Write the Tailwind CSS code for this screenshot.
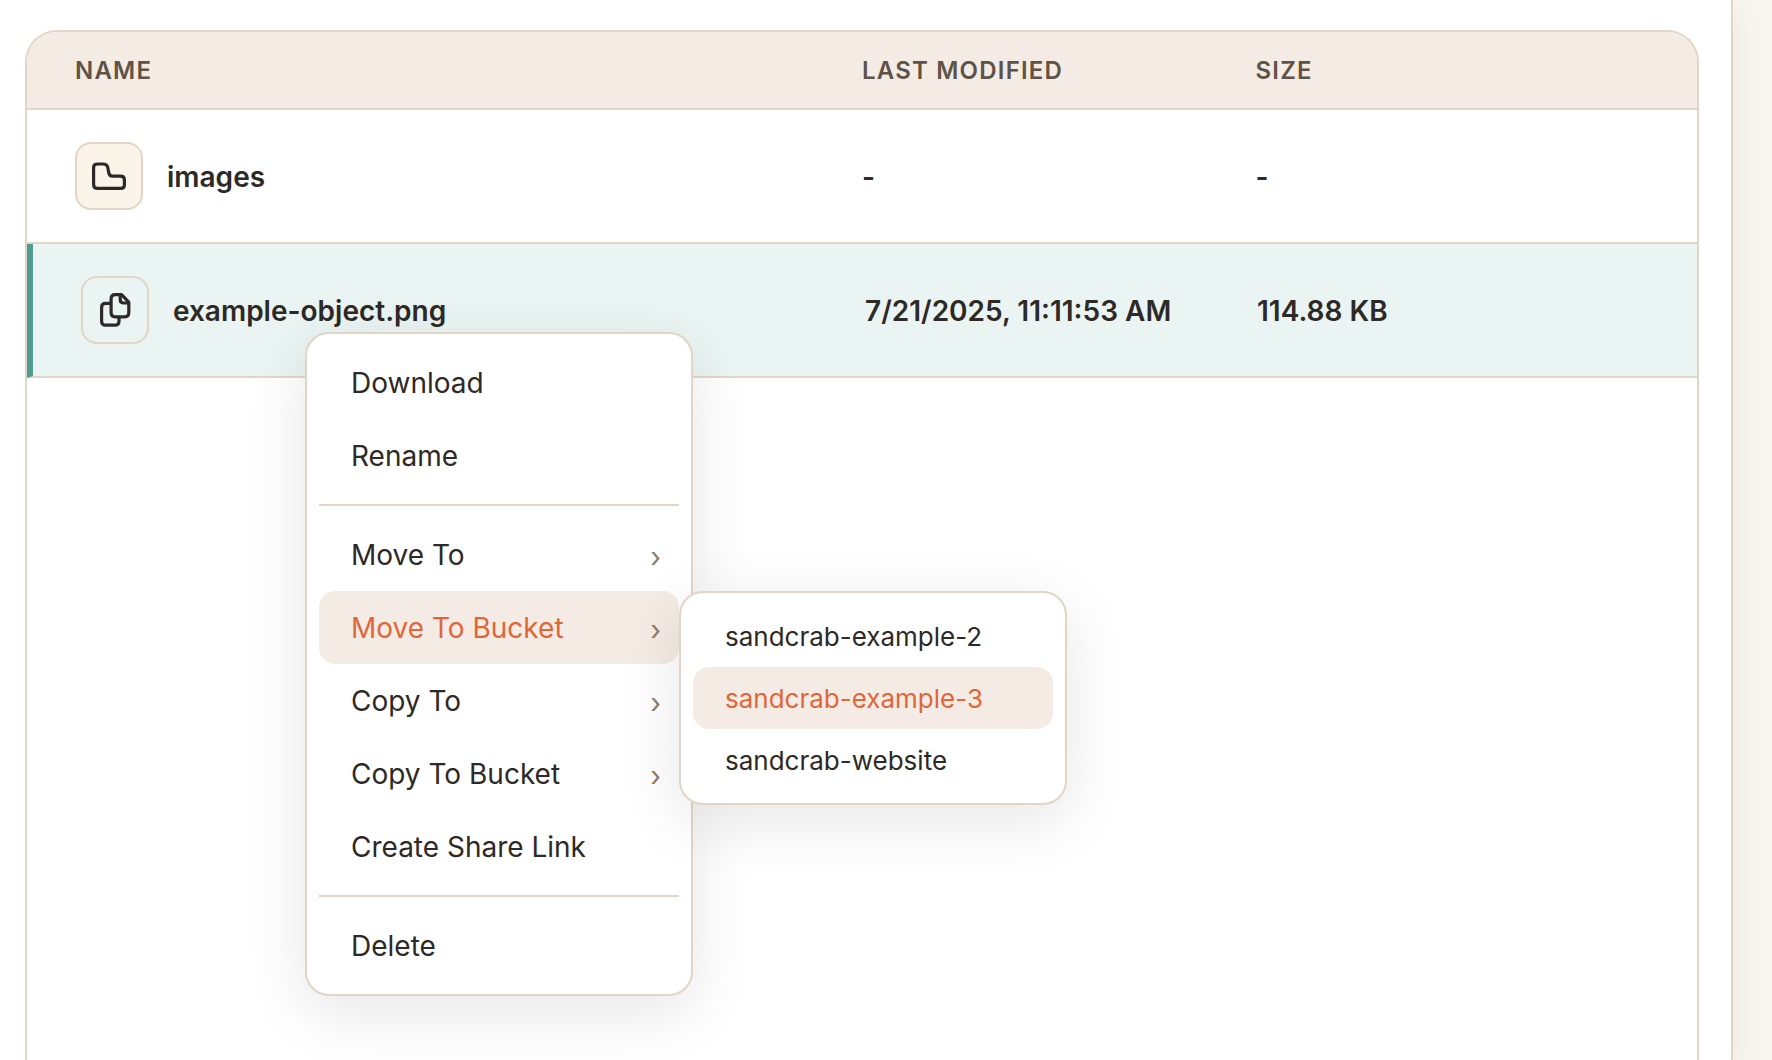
<!DOCTYPE html>
<html lang="en">
<head>
  <meta charset="UTF-8" />
  <meta name="viewport" content="width=device-width, initial-scale=1.0"/>
  <title>Bucket Objects</title>
  <script src="https://cdn.jsdelivr.net/npm/@tailwindcss/browser@4"></script>
</head>
<body class="bg-[#f9f6f0] h-screen overflow-hidden font-['Inter','Liberation_Sans',sans-serif] text-[#2d2926]">
  <main class="flex flex-col h-full mr-[39px] pt-[30px] pl-[25px] pr-8 bg-white border-r-2 border-[#e2d5c5] shadow-[0_8px_32px_rgba(45,41,38,0.08)]">
    <div class="flex-1 border-2 border-b-0 border-[#e2d5c5] rounded-t-[32px] overflow-hidden">
      <table class="block w-full text-left">
        <thead class="block">
          <tr class="grid grid-cols-[2fr_1fr_1fr] items-center h-[78px] px-12 pt-0.5 bg-[#f4ece4] border-b-2 border-[#e2d5c5] text-2xl text-[#5f5347] tracking-wider">
            <th class="font-semibold">NAME</th>
            <th class="font-semibold">LAST MODIFIED</th>
            <th class="font-semibold">SIZE</th>
          </tr>
        </thead>
        <tbody class="block text-[28px] leading-9 font-semibold">
          <tr class="grid grid-cols-[2fr_1fr_1fr] items-center h-[134px] px-12 border-b-2 border-[#e2d5c5]">
            <td class="flex items-center gap-6">
              <span class="flex items-center justify-center size-[68px] rounded-2xl border-2 border-[#e2d5c5] bg-[#fbf5e9]">
                <svg class="w-9 h-9" viewBox="0 0 36 36" fill="none" stroke="currentColor" stroke-width="3.2" stroke-linejoin="round">
                  <path d="M6.500 6H12C15 6 16.300 7 16.800 9.500L17.600 14C18 16.700 19.200 18.200 21.500 18.200H29.500C32 18.200 33.400 19.500 33.400 22V27C33.400 29.300 32 30.400 30 30.400H6.500C4 30.400 2.600 29 2.600 26.500V9.500C2.600 7.200 4 6 6.500 6Z"/>
                </svg>
              </span>
              <span class="pt-0.5">images</span>
            </td>
            <td class="pt-0.5">-</td>
            <td class="pt-0.5">-</td>
          </tr>
          <tr class="grid grid-cols-[2fr_1fr_1fr] items-center h-[134px] px-12 bg-[#eaf4f2] border-b-2 border-b-[#e2d5c5] border-l-6 border-l-[#4f9b8f]">
            <td class="flex items-center gap-6">
              <span class="flex items-center justify-center size-[68px] rounded-2xl border-2 border-[#e2d5c5]">
                <svg class="w-9 h-9" viewBox="0 0 36 36" fill="none" stroke="currentColor" stroke-width="3.2" stroke-linejoin="round">
                  <path d="M14 11.400H8.600C6 11.400 4.600 12.800 4.600 15.400V29C4.600 31.800 6 33.200 8.600 33.200H18C20.600 33.200 22 31.800 22 29V25"/>
                  <path d="M18.200 2.600H24.500L31.800 10.200V20.500C31.800 23.300 30.300 24.800 27.700 24.800H18.200C15.600 24.800 14.100 23.300 14.100 20.500V6.800C14.100 4 15.600 2.600 18.200 2.600Z"/>
                  <path d="M23.200 3V7.500C23.200 9.800 24.400 11 26.600 11H31.500"/>
                </svg>
              </span>
              <span class="pt-0.5">example-object.png</span>
            </td>
            <td class="pt-0.5">7/21/2025, 11:11:53 AM</td>
            <td class="pt-0.5">114.88 KB</td>
          </tr>
        </tbody>
      </table>
    </div>
  </main>

  <!-- Context Menu -->
  <div class="absolute left-[305px] top-[332px] w-[388px] p-3 bg-white border-2 border-[#e2d5c5] rounded-3xl shadow-[0_16px_64px_rgba(0,0,0,0.1)] text-[28px] leading-9">
    <button type="button" class="flex items-center w-full h-[73px] px-8 rounded-2xl">Download</button>
    <button type="button" class="flex items-center w-full h-[73px] px-8 rounded-2xl">Rename</button>
    <hr class="my-3 border-t-2 border-[#e2d5c5]" />
    <button type="button" class="flex items-center justify-between w-full h-[73px] pl-8 pr-[18px] rounded-2xl">
      Move To <span class="pt-1 text-[#8b7d6f]">›</span>
    </button>
    <div class="relative">
      <button type="button" class="flex items-center justify-between w-full h-[73px] pl-8 pr-[18px] rounded-2xl bg-[#f4ece4] text-[#e0663a]">
        Move To Bucket <span class="pt-1 text-[#8b7d6f]">›</span>
      </button>
      <!-- Bucket Submenu -->
      <div class="absolute left-full top-0 z-10 w-[388px] p-3 bg-white border-2 border-[#e2d5c5] rounded-3xl shadow-[0_16px_64px_rgba(0,0,0,0.1)] text-[26px]">
        <button type="button" class="flex items-center w-full h-[62px] px-8 pt-0.5 rounded-2xl">sandcrab-example-2</button>
        <button type="button" class="flex items-center w-full h-[62px] px-8 pt-0.5 rounded-2xl bg-[#f4ece4] text-[#e0663a]">sandcrab-example-3</button>
        <button type="button" class="flex items-center w-full h-[62px] px-8 pt-0.5 rounded-2xl">sandcrab-website</button>
      </div>
    </div>
    <button type="button" class="flex items-center justify-between w-full h-[73px] pl-8 pr-[18px] rounded-2xl">
      Copy To <span class="pt-1 text-[#8b7d6f]">›</span>
    </button>
    <button type="button" class="flex items-center justify-between w-full h-[73px] pl-8 pr-[18px] rounded-2xl">
      Copy To Bucket <span class="pt-1 text-[#8b7d6f]">›</span>
    </button>
    <button type="button" class="flex items-center w-full h-[73px] px-8 rounded-2xl">Create Share Link</button>
    <hr class="my-3 border-t-2 border-[#e2d5c5]" />
    <button type="button" class="flex items-center w-full h-[73px] px-8 rounded-2xl">Delete</button>
  </div>
</body>
</html>
